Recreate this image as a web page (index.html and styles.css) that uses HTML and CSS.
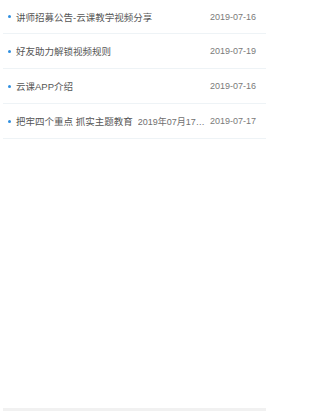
FILE: index.html
```html
<!DOCTYPE html>
<html lang="zh">
<head>
<meta charset="utf-8">
<link rel="stylesheet" href="styles.css">
</head>
<body>
<div class="page">
  <ul class="list">
    <li class="row">
      <span class="dot"></span>
      <span class="title">讲师招募公告-云课教学视频分享</span>
      <span class="sub"></span>
      <span class="date">2019-07-16</span>
    </li>
    <li class="row">
      <span class="dot"></span>
      <span class="title">好友助力解锁视频规则</span>
      <span class="sub"></span>
      <span class="date">2019-07-19</span>
    </li>
    <li class="row">
      <span class="dot"></span>
      <span class="title">云课APP介绍</span>
      <span class="sub"></span>
      <span class="date">2019-07-16</span>
    </li>
    <li class="row">
      <span class="dot"></span>
      <span class="title">把牢四个重点 抓实主题教育</span>
      <span class="sub">2019年07月17日，全区开展主题教育</span>
      <span class="date">2019-07-17</span>
    </li>
  </ul>
  <div class="bottom-bar"></div>
</div>
</body>
</html>
```

FILE: styles.css
```css
html, body {
  margin: 0;
  padding: 0;
  background: #ffffff;
}
.page {
  width: 269px;
  height: 418px;
  display: flex;
  flex-direction: column;
  font-family: "Liberation Sans", "Noto Sans CJK SC", sans-serif;
}
.list {
  list-style: none;
  margin: 0;
  padding: 0;
  flex: 1;
}
.row {
  height: 34px;
  margin: 0 3px;
  padding: 0 10px 0 5px;
  display: flex;
  align-items: center;
  border-bottom: 1px solid #eef3f6;
  box-sizing: content-box;
}
.row:first-child {
  height: 33px;
}
.dot {
  width: 3px;
  height: 3px;
  border-radius: 50%;
  background: #2f8fe0;
  flex: none;
  margin-right: 5px;
}
.title {
  font-size: 9.5px;
  color: #555555;
  white-space: nowrap;
  flex: none;
  margin-right: 5px;
}
.sub {
  flex: 1;
  min-width: 0;
  font-size: 9px;
  color: #6f6f6f;
  white-space: nowrap;
  overflow: hidden;
  text-overflow: ellipsis;
  margin-right: 3px;
}
.date {
  flex: none;
  font-size: 9px;
  color: #7a7a7a;
}
.bottom-bar {
  height: 3px;
  margin: 0 3px 7px 3px;
  background: #f1f1f1;
}
```
